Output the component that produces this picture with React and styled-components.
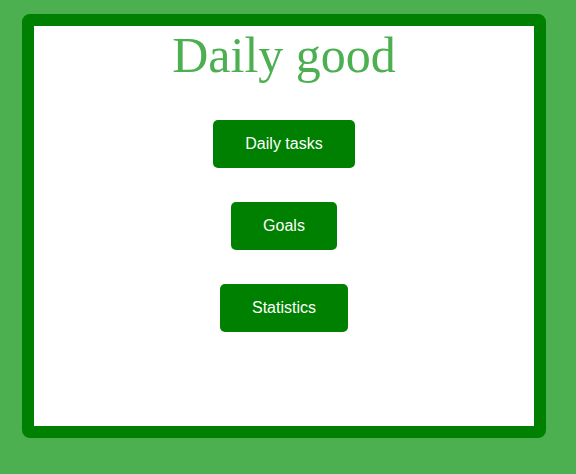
import React from 'react';
import styled, { createGlobalStyle } from 'styled-components';

const GlobalStyle = createGlobalStyle`
  html, body {
    margin: 0;
    padding: 0;
    background-color: #4CAF50;
  }
  body {
    padding: 14px 22px;
    font-family: "Liberation Serif", "Times New Roman", serif;
  }
`

const Card = styled.div`
  width: 500px;
  height: 399px;
  background-color: #ffffff;
  border: 12px solid #008000;
  border-radius: 8px;
  display: flex;
  flex-direction: column;
  align-items: center;
  padding-top: 1px;
  box-sizing: content-box;
`

const Title = styled.h1`
  margin: 0;
  color: #4CAF50;
  font-family: "Liberation Serif", "Times New Roman", serif;
  font-size: 50px;
  font-weight: 400;
  line-height: 56px;
`

const Menu = styled.div`
  display: flex;
  flex-direction: column;
  align-items: center;
  gap: 34px;
  margin-top: 37px;
`

const MenuButton = styled.button`
  height: 48px;
  padding: 0 32px;
  border: none;
  border-radius: 5px;
  background-color: #008000;
  color: #ffffff;
  font-family: "Liberation Sans", Arial, sans-serif;
  font-size: 16px;
  cursor: pointer;
`

const items = ['Daily tasks', 'Goals', 'Statistics'];

const App = () => {
  return (
    <>
      <GlobalStyle />
      <Card>
        <Title>Daily good</Title>
        <Menu>
          {items.map((label) => (
            <MenuButton key={label}>{label}</MenuButton>
          ))}
        </Menu>
      </Card>
    </>
  );
};

export default App;
